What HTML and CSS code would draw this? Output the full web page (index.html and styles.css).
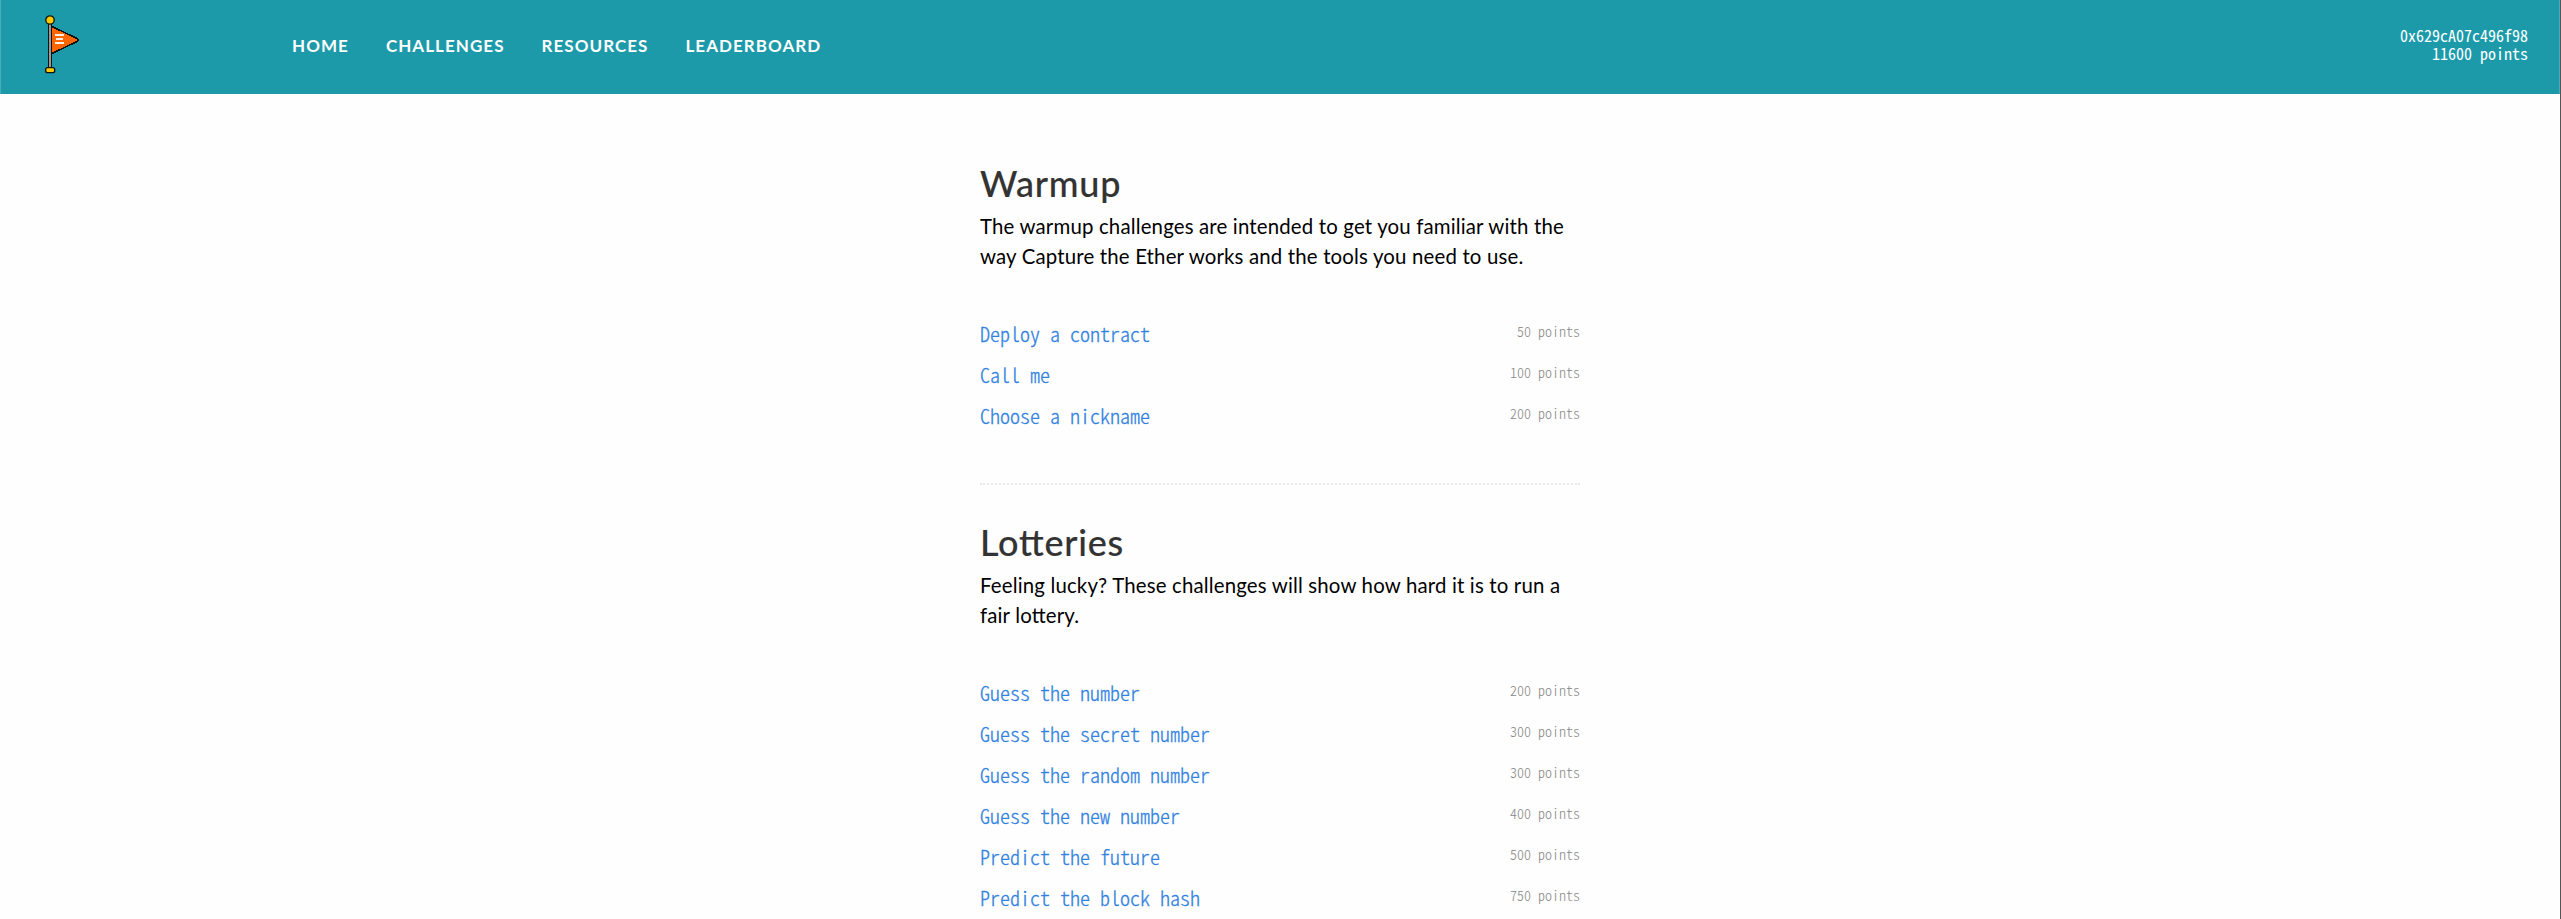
FILE: index.html
```html
<!DOCTYPE html>
<html lang="en">
<head>
<meta charset="utf-8">
<title>Challenges</title>
<link rel="stylesheet" href="styles.css">
</head>
<body>
<header class="topbar">
  <a class="logo" href="#">
    <svg width="40" height="60" viewBox="0 0 40 60" shape-rendering="crispEdges" aria-hidden="true">
      <path d="M10 11 L36 23.5 Q38 25 36 26.5 L10 39 Z" fill="#ff6600" stroke="#0c1414" stroke-width="1.6"/>
      <path d="M14 19h9v2h-9zM15 23h7v2h-7zM14 27h9v2h-9z" fill="#fff0e4"/>
      <rect x="7" y="8" width="4" height="46" fill="#0c1414"/>
      <rect x="8" y="9" width="2" height="44" fill="#999"/>
      <circle cx="9" cy="5" r="4.2" fill="#ffc800" stroke="#0c1414" stroke-width="1.3" shape-rendering="auto"/>
      <rect x="4.7" y="52.7" width="9" height="5" rx="2" fill="#ffc800" stroke="#0c1414" stroke-width="1.3" shape-rendering="auto"/>
    </svg>
  </a>
  <nav class="nav">
    <a href="#">HOME</a>
    <a href="#">CHALLENGES</a>
    <a href="#">RESOURCES</a>
    <a href="#">LEADERBOARD</a>
  </nav>
  <div class="account"><div>0x629cA07c496f98</div><div>11600 points</div></div>
</header>
<main class="content">
  <section class="group">
    <h2>Warmup</h2>
    <p>The warmup challenges are intended to get you familiar with the<br>way Capture the Ether works and the tools you need to use.</p>
    <ul>
      <li><a href="#">Deploy a contract</a><span>50 points</span></li>
      <li><a href="#">Call me</a><span>100 points</span></li>
      <li><a href="#">Choose a nickname</a><span>200 points</span></li>
    </ul>
  </section>
  <section class="group">
    <h2>Lotteries</h2>
    <p>Feeling lucky? These challenges will show how hard it is to run a<br>fair lottery.</p>
    <ul>
      <li><a href="#">Guess the number</a><span>200 points</span></li>
      <li><a href="#">Guess the secret number</a><span>300 points</span></li>
      <li><a href="#">Guess the random number</a><span>300 points</span></li>
      <li><a href="#">Guess the new number</a><span>400 points</span></li>
      <li><a href="#">Predict the future</a><span>500 points</span></li>
      <li><a href="#">Predict the block hash</a><span>750 points</span></li>
    </ul>
  </section>
</main>
</body>
</html>
```
FILE: styles.css
```css
* { box-sizing: border-box; }
body {
  margin: 0;
  height: 919px;
  overflow: hidden;
  background: #fefefe;
  border-right: 1px solid #555;
  font-family: Lato, sans-serif;
  color: #000;
}
a { text-decoration: none; }
.topbar {
  display: flex;
  align-items: flex-start;
  height: 94px;
  background: #1c9aaa;
  border-left: 1px solid #4bacb9;
  border-right: 1px solid #4bacb9;
  color: #fff;
}
.logo { display: block; width: 251px; padding: 15px 0 0 40px; }
.nav {
  display: flex;
  gap: 37px;
  padding: 33px 0 0 40px;
  font-size: 17px;
  font-weight: 700;
  line-height: 26px;
  letter-spacing: 1.05px;
}
.nav a { color: #fff; }
.account {
  margin-left: auto;
  padding: 26px 31px 0 0;
  text-align: right;
  font: 16px/18px "Noto Sans CJK JP", monospace;
  font-feature-settings: "hwid";
}
.content { width: 600px; margin: 0 0 0 980px; padding-top: 63px; }
h2 {
  margin: 0 0 2px;
  font-size: 36px;
  font-weight: 500;
  line-height: 52px;
  letter-spacing: .75px;
  font-feature-settings: "liga";
  -webkit-text-stroke: .15px #333;
  color: #333;
}
p {
  margin: 0 0 47px;
  font-size: 20.4px;
  line-height: 30px;
  letter-spacing: .17px;
  font-feature-settings: "liga";
  white-space: nowrap;
}
ul { margin: 0; padding: 0; list-style: none; }
li {
  display: flex;
  justify-content: space-between;
  height: 41px;
  font-family: "Noto Sans CJK JP", monospace;
  font-weight: 300;
  font-feature-settings: "hwid";
}
li a { font-size: 20px; line-height: 32px; color: #3181e1; -webkit-text-stroke: .3px #3181e1; }
li span { font-size: 14px; line-height: 26px; color: #868686; }
.group + .group { margin-top: 42px; padding-top: 31px; border-top: 2px dotted #e9e9e9; }
```
